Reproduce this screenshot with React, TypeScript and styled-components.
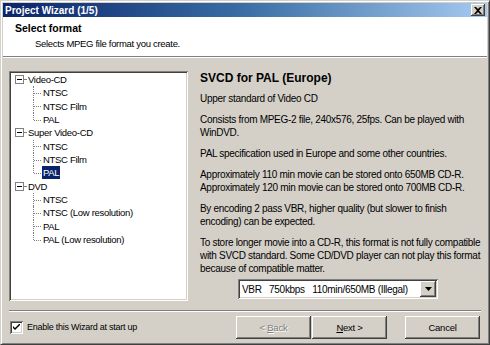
import React from 'react';
import styled, { createGlobalStyle } from 'styled-components';

const Global = createGlobalStyle`
  html, body {
    margin: 0;
    padding: 0;
    background: #d4d0c8;
  }
  body {
    font-family: "Liberation Sans", Arial, sans-serif;
    font-size: 10px;
    letter-spacing: -0.3px;
    color: #000;
  }
`;

const boldFont = `
  font-family: "Liberation Sans", Arial, sans-serif;
  font-weight: bold;
  letter-spacing: 0;
`;

const Window = styled.div`
  box-sizing: border-box;
  width: 490px;
  height: 345px;
  display: flex;
  flex-direction: column;
  background: #d4d0c8;
  border: 1px solid;
  border-color: #d4d0c8 #404040 #404040 #d4d0c8;
  box-shadow: inset 1px 1px #fff, inset -1px -1px #808080;
  padding: 2px;
`;

const TitleBar = styled.div`
  height: 14px;
  display: flex;
  align-items: center;
  justify-content: space-between;
  padding-left: 2px;
  background: linear-gradient(90deg, #0a246a 0%, #3a6ea5 50%, #a6caf0 100%);
  color: #fff;
  ${boldFont}
  font-size: 10px;
`;

const CloseButton = styled.div`
  width: 14px;
  height: 12px;
  margin-right: 2px;
  background: #d4d0c8;
  box-shadow: inset -1px -1px #404040, inset 1px 1px #fff, inset -2px -2px #808080;
  display: flex;
  align-items: center;
  justify-content: center;
`;

const Header = styled.div`
  height: 39px;
  box-sizing: border-box;
  background: #fff;
  padding: 5px 0 0 12px;
  display: flex;
  flex-direction: column;
  gap: 2px;
`;

const HeaderTitle = styled.div`
  ${boldFont}
  font-size: 10.5px;
  line-height: 13px;
`;

const HeaderSub = styled.div`
  font-size: 9.5px;
  line-height: 13px;
  padding-left: 20px;
`;

const Etched = styled.div<{ $inset?: number }>`
  height: 0;
  border-top: 1px solid #808080;
  border-bottom: 1px solid #fff;
  margin: 0 ${p => p.$inset ?? 0}px;
`;

const Body = styled.div`
  flex: 1;
  display: flex;
  gap: 12px;
  padding: 13px 6px 9px 6px;
`;

const TreeBox = styled.div`
  box-sizing: border-box;
  flex-shrink: 0;
  width: 179px;
  height: 230px;
  background: #fff;
  box-shadow: inset 1px 1px #808080, inset -1px -1px #fff, inset 2px 2px #404040, inset -2px -2px #d4d0c8;
  padding: 2px;
`;

const Row = styled.div`
  height: 13.33px;
  display: flex;
  align-items: center;
`;

const Expander = styled.span`
  box-sizing: border-box;
  width: 9px;
  height: 9px;
  margin-left: 4px;
  border: 1px solid #808080;
  background: #fff;
  position: relative;
  &::after {
    content: '';
    position: absolute;
    left: 1px;
    top: 3px;
    width: 5px;
    height: 1px;
    background: #000;
  }
`;

const Dash = styled.span`
  width: 2px;
  margin-right: 1px;
  border-top: 1px dotted #808080;
`;

const Connector = styled.span<{ $last: boolean }>`
  position: relative;
  align-self: stretch;
  width: 9px;
  margin-left: 22px;
  &::before {
    content: '';
    position: absolute;
    left: 0;
    top: 0;
    height: ${p => (p.$last ? '50%' : '100%')};
    border-left: 1px dotted #808080;
  }
  &::after {
    content: '';
    position: absolute;
    left: 1px;
    top: 50%;
    width: 7px;
    border-top: 1px dotted #808080;
  }
`;

const Label = styled.span<{ $selected?: boolean }>`
  padding: 0 1px;
  font-size: 9.5px;
  line-height: 13px;
  white-space: nowrap;
  background: ${p => (p.$selected ? '#0a246a' : 'transparent')};
  color: ${p => (p.$selected ? '#fff' : '#000')};
`;

const Info = styled.div`
  flex: 1;
  min-width: 0;
  display: flex;
  flex-direction: column;
`;

const InfoTitle = styled.div`
  ${boldFont}
  font-size: 12px;
  line-height: 15px;
  margin-bottom: 6px;
`;

const Para = styled.p`
  margin: 0 0 8px 0;
  line-height: 13px;
  white-space: nowrap;
  &:last-of-type {
    margin-bottom: 4px;
  }
`;

const Select = styled.div`
  box-sizing: border-box;
  margin: 0 0 0 38px;
  width: 200px;
  height: 20px;
  background: #fff;
  box-shadow: inset 1px 1px #808080, inset -1px -1px #fff, inset 2px 2px #404040, inset -2px -2px #d4d0c8;
  padding: 2px;
  display: flex;
  align-items: center;
  justify-content: space-between;
`;

const SelectText = styled.span`
  padding-left: 2px;
  white-space: pre;
`;

const ArrowButton = styled.span`
  width: 16px;
  height: 16px;
  background: #d4d0c8;
  box-shadow: inset -1px -1px #404040, inset 1px 1px #fff, inset -2px -2px #808080;
  display: flex;
  align-items: center;
  justify-content: center;
`;

const Footer = styled.div`
  height: 30px;
  display: flex;
  align-items: center;
  padding: 0 7px 0 7px;
`;

const CheckLabel = styled.label`
  display: flex;
  align-items: center;
  gap: 4px;
  flex: 1;
  font-size: 9px;
  letter-spacing: -0.25px;
`;

const CheckBox = styled.span`
  box-sizing: border-box;
  width: 13px;
  height: 13px;
  background: #fff;
  box-shadow: inset 1px 1px #808080, inset -1px -1px #fff, inset 2px 2px #404040, inset -2px -2px #d4d0c8;
  display: flex;
  align-items: center;
  justify-content: center;
`;

const Button = styled.button<{ $gap?: number }>`
  flex-shrink: 0;
  width: 75px;
  height: 23px;
  padding: 0;
  margin-left: ${p => p.$gap ?? 0}px;
  border: none;
  background: #d4d0c8;
  box-shadow: inset -1px -1px #404040, inset 1px 1px #fff, inset -2px -2px #808080;
  font-family: "Liberation Sans", Arial, sans-serif;
  font-size: 9.5px;
  letter-spacing: -0.25px;
  color: #000;
  &:disabled {
    color: #808080;
    text-shadow: 1px 1px #fff;
  }
`;

const tree = [
  { label: 'Video-CD', children: ['NTSC', 'NTSC Film', 'PAL'], selected: -1 },
  { label: 'Super Video-CD', children: ['NTSC', 'NTSC Film', 'PAL'], selected: 2 },
  {
    label: 'DVD',
    children: ['NTSC', 'NTSC (Low resolution)', 'PAL', 'PAL (Low resolution)'],
    selected: -1,
  },
];

const paragraphs = [
  ['Upper standard of Video CD'],
  ['Consists from MPEG-2 file, 240x576, 25fps. Can be played with', 'WinDVD.'],
  ['PAL specification used in Europe and some other countries.'],
  [
    'Approximately 110 min movie can be stored onto 650MB CD-R.',
    'Approximately 120 min movie can be stored onto 700MB CD-R.',
  ],
  ['By encoding 2 pass VBR, higher quality (but slower to finish', 'encoding) can be expected.'],
  [
    'To store longer movie into a CD-R, this format is not fully compatible',
    'with SVCD standard. Some CD/DVD player can not play this format',
    'because of compatible matter.',
  ],
];

export default function App() {
  return (
    <>
      <Global />
      <Window>
        <TitleBar>
          <span>Project Wizard (1/5)</span>
          <CloseButton>
            <svg width="8" height="7" viewBox="0 0 8 7">
              <path d="M0 0h2l2 2 2-2h2L5 3.5 8 7H6L4 5 2 7H0l3-3.5z" fill="#000" />
            </svg>
          </CloseButton>
        </TitleBar>
        <Header>
          <HeaderTitle>Select format</HeaderTitle>
          <HeaderSub>Selects MPEG file format you create.</HeaderSub>
        </Header>
        <Etched />
        <Body>
          <TreeBox>
            {tree.map(group => (
              <div key={group.label}>
                <Row>
                  <Expander />
                  <Dash />
                  <Label>{group.label}</Label>
                </Row>
                {group.children.map((child, i) => (
                  <Row key={child + i}>
                    <Connector $last={i === group.children.length - 1} />
                    <Label $selected={i === group.selected}>{child}</Label>
                  </Row>
                ))}
              </div>
            ))}
          </TreeBox>
          <Info>
            <InfoTitle>SVCD for PAL (Europe)</InfoTitle>
            {paragraphs.map((lines, i) => (
              <Para key={i}>
                {lines.map((line, j) => (
                  <React.Fragment key={j}>
                    {j > 0 && <br />}
                    {line}
                  </React.Fragment>
                ))}
              </Para>
            ))}
            <Select>
              <SelectText>VBR   750kbps   110min/650MB (Illegal)</SelectText>
              <ArrowButton>
                <svg width="7" height="4" viewBox="0 0 7 4">
                  <path d="M0 0h7L3.5 4z" fill="#000" />
                </svg>
              </ArrowButton>
            </Select>
          </Info>
        </Body>
        <Etched $inset={6} />
        <Footer>
          <CheckLabel>
            <CheckBox>
              <svg width="7" height="7" viewBox="0 0 7 7">
                <path d="M0 2l2 2 5-5v2L2 6 0 4z" fill="#000" />
              </svg>
            </CheckBox>
            Enable this Wizard at start up
          </CheckLabel>
          <Button disabled>
            &lt; <u>B</u>ack
          </Button>
          <Button $gap={1}>
            <u>N</u>ext &gt;
          </Button>
          <Button $gap={18}>Cancel</Button>
        </Footer>
      </Window>
    </>
  );
}
